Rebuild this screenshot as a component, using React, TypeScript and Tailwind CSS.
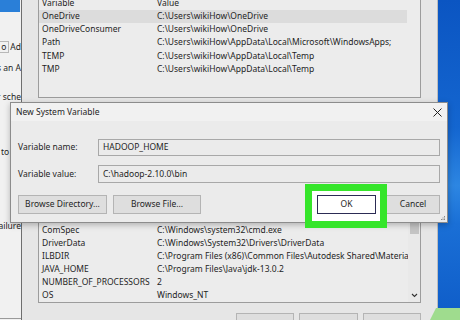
import React from "react";

const font = "font-['Noto_Sans','Open_Sans',sans-serif]";

const userVars = [
  { name: "OneDrive", value: "C:\\Users\\wikiHow\\OneDrive", selected: true },
  { name: "OneDriveConsumer", value: "C:\\Users\\wikiHow\\OneDrive" },
  { name: "Path", value: "C:\\Users\\wikiHow\\AppData\\Local\\Microsoft\\WindowsApps;" },
  { name: "TEMP", value: "C:\\Users\\wikiHow\\AppData\\Local\\Temp" },
  { name: "TMP", value: "C:\\Users\\wikiHow\\AppData\\Local\\Temp" },
];

const systemVars = [
  { name: "ComSpec", value: "C:\\Windows\\system32\\cmd.exe" },
  { name: "DriverData", value: "C:\\Windows\\System32\\Drivers\\DriverData" },
  { name: "ILBDIR", value: "C:\\Program Files (x86)\\Common Files\\Autodesk Shared\\Materia..." },
  { name: "JAVA_HOME", value: "C:\\Program Files\\Java\\jdk-13.0.2" },
  { name: "NUMBER_OF_PROCESSORS", value: "2" },
  { name: "OS", value: "Windows_NT" },
];

const Row = ({ name, value, selected }: { name: string; value: string; selected?: boolean }) => (
  <div className={`flex h-[13.1px] shrink-0 items-center whitespace-nowrap pl-[3px] ${selected ? "bg-[#dcdcdc]" : ""}`}>
    <span className="w-[115px] shrink-0">{name}</span>
    <span>{value}</span>
  </div>
);

const WinButton = ({ label, className }: { label: string; className: string }) => (
  <div className={`flex items-center justify-center border border-[#b4b4b4] bg-[#dedede] ${className}`}>{label}</div>
);

const App: React.FC = () => {
  return (
    <div className={`relative flex h-[320px] w-[460px] overflow-hidden bg-[#e6e6e6] text-[8.5px] text-[#1e1e1e] ${font}`}>
      {/* system properties window, mostly covered */}
      <div className="flex w-[21px] shrink-0 flex-col overflow-hidden bg-[#f1f1f1]">
        <div className="h-[12px] w-[20px] shrink-0 bg-[#2a7fd8]" />
        <div className="mt-[29px] flex h-[12px] shrink-0 items-center">
          <div className="flex h-[12px] w-[10px] items-center justify-end border border-l-0 border-[#b8b8b8] pr-[2px]">o</div>
          <div className="ml-[1px] whitespace-nowrap">Ad</div>
        </div>
        <div className="mt-[9px] flex h-[13px] shrink-0 items-center justify-end whitespace-nowrap">s an A</div>
        <div className="mt-[16px] flex h-[13px] shrink-0 items-center justify-end whitespace-nowrap">r sche</div>
        <div className="mt-[42px] flex h-[13px] shrink-0 items-center whitespace-nowrap pl-[1px]">to</div>
        <div className="mt-[61px] flex h-[13px] shrink-0 items-center justify-end whitespace-nowrap">ailure</div>
        <div className="mt-[85px] h-px w-full shrink-0 bg-[#9a9a9a]" />
      </div>

      {/* environment variables window */}
      <div className="flex w-[417px] shrink-0 flex-col border-x border-l-[#6e6e6e] border-r-[#bdbdbd] bg-[#e6e6e6] px-[16px]">
        <div className="-mt-[4px] flex h-[102px] shrink-0 flex-col overflow-hidden border border-[#9c9c9c] bg-[#ececec]">
          <Row name="Variable" value="Value" />
          {userVars.map((v) => (
            <div key={v.name} className="pr-[13px]">
              <Row {...v} />
            </div>
          ))}
        </div>

        <div className="mt-[14px] flex h-[191px] shrink-0 border border-[#9c9c9c] bg-[#ececec]">
          <div className="flex flex-1 flex-col justify-end overflow-hidden">
            {systemVars.map((v) => (
              <Row key={v.name} {...v} />
            ))}
          </div>
          <div className="flex w-[12px] flex-col items-center bg-[#e9e9e9]">
            <div className="mt-[91px] h-[30px] w-[9px] bg-[#c4c4c4]" />
            <div className="flex-1" />
            <svg width="7" height="5" viewBox="0 0 7 5" className="mb-[4px]">
              <path d="M1 1l2.5 2.5L6 1" fill="none" stroke="#333" strokeWidth="1.1" />
            </svg>
          </div>
        </div>

        <div className="mt-[10px] flex justify-end gap-[5px]">
          <WinButton label="New..." className="h-[24px] w-[58px]" />
          <WinButton label="Edit..." className="h-[24px] w-[59px]" />
          <WinButton label="Delete" className="h-[24px] w-[58px]" />
        </div>
      </div>

      {/* desktop */}
      <div className="flex-1 bg-[linear-gradient(180deg,#0b55c2_0%,#1466d0_40%,#2d86e2_58%,#1a6fd6_70%,#0e5cc8_100%)]" />

      {/* new system variable dialog */}
      <div className="absolute left-[10px] top-[102px] flex h-[121px] w-[438px] flex-col border border-[#8c8c8c] bg-[#ebebeb] shadow-[0_2px_6px_rgba(0,0,0,0.25)]">
        <div className="flex h-[18px] shrink-0 items-center justify-between bg-[#f1f1f1] pl-[5px] pr-[5px]">
          <span>New System Variable</span>
          <svg width="9" height="9" viewBox="0 0 9 9">
            <path d="M0.5 0.5l8 8M8.5 0.5l-8 8" stroke="#222" strokeWidth="1" />
          </svg>
        </div>

        <div className="relative flex flex-1 flex-col px-[7px] pt-[18px]">
          <div className="flex h-[17px] items-center">
            <span className="w-[80px] shrink-0">Variable name:</span>
            <div className="flex h-full flex-1 items-center border border-[#a8a8a8] bg-[#ebebeb] pl-[4px]">HADOOP_HOME</div>
          </div>
          <div className="mt-[9px] flex h-[18px] items-center">
            <span className="w-[80px] shrink-0">Variable value:</span>
            <div className="flex h-full flex-1 items-center border border-[#a8a8a8] bg-[#ebebeb] pl-[4px]">C:\hadoop-2.10.0\bin</div>
          </div>

          <div className="mt-[12px] flex h-[19px] items-center">
            <WinButton label="Browse Directory..." className="h-full w-[89px]" />
            <WinButton label="Browse File..." className="ml-[6px] h-full w-[88px]" />
            <div className="flex-1" />
            <div className="relative h-full w-[59px]">
              <div className="absolute -left-[12px] -top-[11px] h-[44px] w-[82px] border-[7px] border-[#35e52a] bg-white" />
              <div className="relative flex h-full w-full items-center justify-center border border-[#2c2c55] bg-white">OK</div>
            </div>
            <WinButton label="Cancel" className="ml-[10px] h-full w-[54px]" />
          </div>

          <svg width="5" height="5" viewBox="0 0 5 5" className="absolute bottom-[1px] right-[1px]">
            <rect x="3" y="0" width="1" height="1" fill="#888" />
            <rect x="1.5" y="1.5" width="1" height="1" fill="#888" />
            <rect x="3" y="1.5" width="1" height="1" fill="#888" />
            <rect x="0" y="3" width="1" height="1" fill="#888" />
            <rect x="1.5" y="3" width="1" height="1" fill="#888" />
            <rect x="3" y="3" width="1" height="1" fill="#888" />
          </svg>
        </div>
      </div>

      {/* watermark corner */}
      <svg width="30" height="12" viewBox="0 0 30 12" className="absolute bottom-0 right-0">
        <path d="M6 0H30V12H0Z" fill="#9fdc8e" />
      </svg>
    </div>
  );
};

export default App;
